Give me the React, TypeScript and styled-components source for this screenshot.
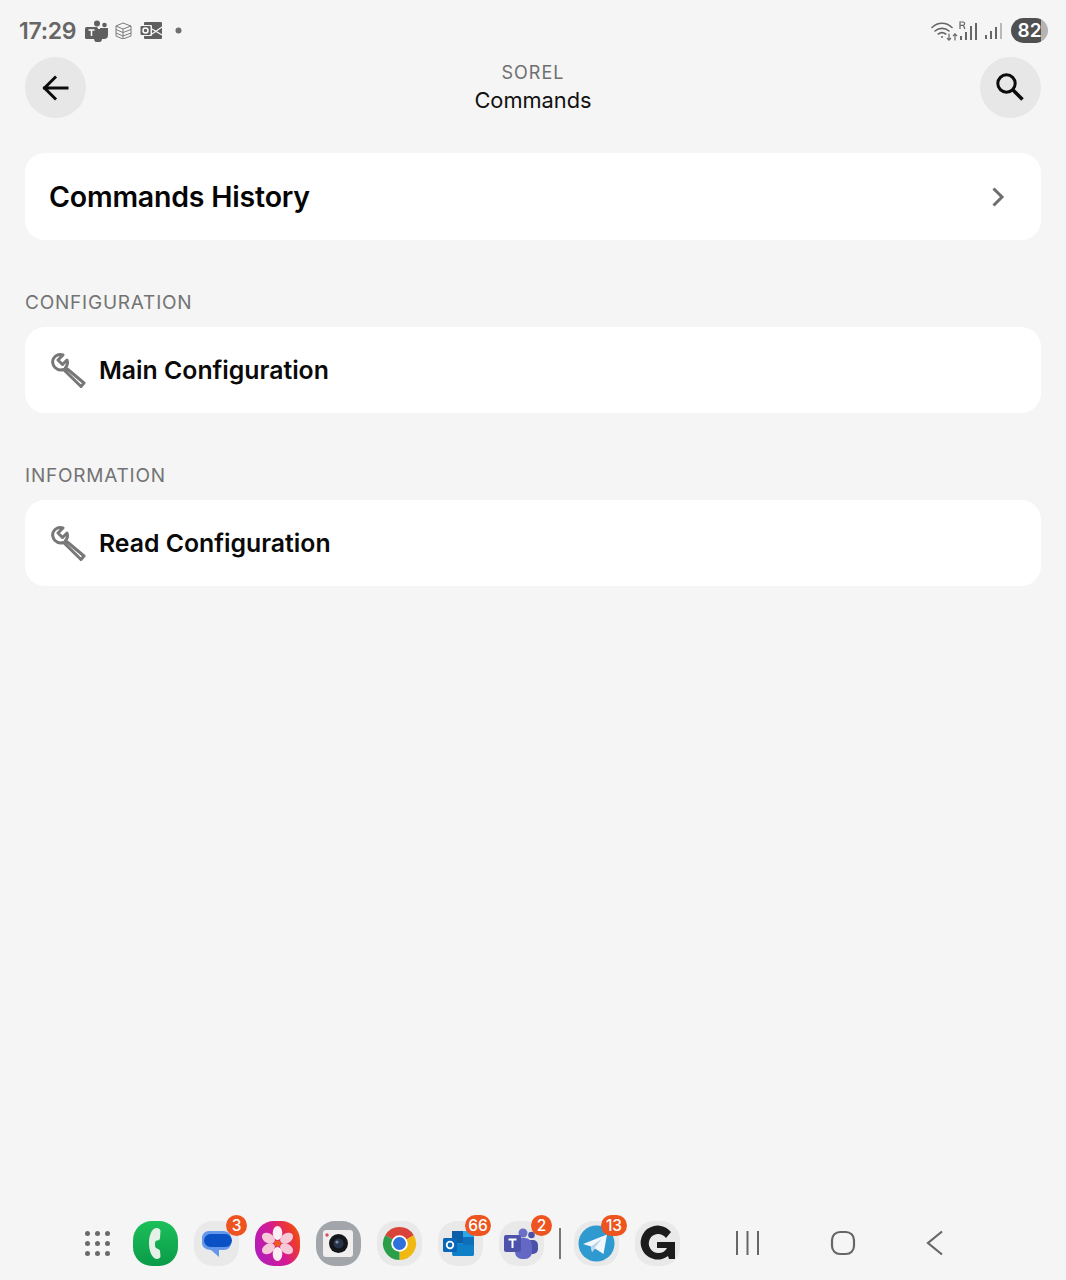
import React from "react";
import styled, { createGlobalStyle } from "styled-components";

const Global = createGlobalStyle`
  html, body { margin: 0; padding: 0; background: #f5f5f5; }
  body { font-family: "Inter", "Liberation Sans", sans-serif; }
`;

const Page = styled.div`
  width: 1066px;
  height: 1280px;
  overflow: hidden;
  display: flex;
  flex-direction: column;
  background: #f5f5f5;
`;

const StatusBar = styled.div`
  height: 57px;
  flex: none;
  padding: 4px 18px 0 19px;
  box-sizing: border-box;
  display: flex;
  align-items: center;
  justify-content: space-between;
  color: #666;
`;

const StatusGroup = styled.div<{ $gap: number }>`
  display: flex;
  align-items: center;
  gap: ${(p) => p.$gap}px;
`;

const Clock = styled.span`
  font-size: 23px;
  font-weight: 600;
  letter-spacing: -0.25px;
  margin-right: 2px;
  color: #666;
`;

const Battery = styled.div`
  width: 37px;
  height: 25px;
  border-radius: 13px;
  background: linear-gradient(90deg, #505050 0 82%, #b4b4b4 82% 100%);
  color: #fff;
  font-size: 19px;
  font-weight: 600;
  display: flex;
  align-items: center;
  justify-content: center;
`;

const Header = styled.header`
  height: 61px;
  flex: none;
  padding: 0 25px;
  display: flex;
  align-items: center;
  justify-content: space-between;
`;

const RoundButton = styled.button`
  width: 61px;
  height: 61px;
  border: 0;
  padding: 0;
  border-radius: 50%;
  background: #e7e7e7;
  display: flex;
  align-items: center;
  justify-content: center;
`;

const TitleBlock = styled.div`
  display: flex;
  flex-direction: column;
  align-items: center;
`;

const Overline = styled.div`
  font-size: 18px;
  line-height: 26px;
  color: #6f6f6f;
  letter-spacing: 1px;
`;

const Title = styled.div`
  font-size: 21.8px;
  line-height: 29px;
  color: #111;
`;

const Content = styled.main`
  flex: 1;
  padding: 35px 25px 0;
  display: flex;
  flex-direction: column;
`;

const Card = styled.div<{ $tall?: boolean }>`
  height: ${(p) => (p.$tall ? "87px" : "86px")};
  box-sizing: border-box;
  padding: 0 25px;
  background: #fff;
  border-radius: 20px;
  display: flex;
  align-items: center;
  gap: 13px;
`;

const HistoryLabel = styled.span`
  flex: 1;
  margin-left: -1px;
  font-size: 28.5px;
  font-weight: 600;
  color: #050505;
  letter-spacing: -0.2px;
`;

const RowLabel = styled.span`
  font-size: 24.8px;
  font-weight: 600;
  color: #0a0a0a;
`;

const SectionLabel = styled.div`
  margin: 51px 0 13px;
  font-size: 19px;
  line-height: 23px;
  letter-spacing: 0.78px;
  color: #737373;
`;

const Dock = styled.footer`
  height: 75px;
  flex: none;
  padding: 1px 0 0 81px;
  box-sizing: border-box;
  display: flex;
  align-items: center;
`;

const Launcher = styled.div`
  width: 32px;
  display: grid;
  grid-template-columns: repeat(3, 5px);
  gap: 5px;
  justify-content: center;
  margin-right: 20px;
  & > i {
    width: 5px;
    height: 5px;
    border-radius: 50%;
    background: #6a6a6a;
  }
`;

const Apps = styled.div`
  display: flex;
  align-items: center;
  gap: 16px;
`;

const AppIcon = styled.div<{ $bg: string }>`
  position: relative;
  width: 45px;
  height: 45px;
  border-radius: 42%;
  background: ${(p) => p.$bg};
  display: flex;
  align-items: center;
  justify-content: center;
  flex: none;
`;

const Badge = styled.span<{ $wide?: boolean }>`
  position: absolute;
  top: -6px;
  right: -8px;
  width: ${(p) => (p.$wide ? "26px" : "21px")};
  height: 21px;
  border-radius: 11px;
  background: #ee5420;
  color: #fff;
  font-size: 15.5px;
  font-weight: 500;
  display: flex;
  align-items: center;
  justify-content: center;
`;

const Divider = styled.div`
  width: 2px;
  height: 31px;
  background: #777;
  margin: 0 -3px 0 -1px;
`;

const NavKeys = styled.div`
  display: flex;
  align-items: center;
  margin-left: 55px;
  gap: 70px;
`;

const Ic = { dark: "#5f5f5f" };

const Wrench = () => (
  <svg width="36" height="36" viewBox="0 0 36 36" fill="none" stroke="#777" strokeWidth="3" strokeLinejoin="round">
    <path d="M13 3 8 8 12.500 12.500 17 8C18 11 17.500 13.500 15.500 15.500L34 31 31 34.500 13.500 17.500C10.500 18.500 7 17.500 5 15.500 2.500 13 2 9 3.500 6.500 6 3 9.500 2 13 3Z" />
  </svg>
);

const PhoneApp = () => (
  <AppIcon $bg="linear-gradient(180deg,#1cc05a,#0a9a48)">
    <svg width="45" height="45" viewBox="0 0 45 45">
      <path d="M23 7c2.500-.5 4.500 1 4.500 3l-.5 7c-.2 1.500-1 2.500-3 2.500-1.500 0-2 1.500-2 4s.5 3.500 2 4c1.500.5 2.500 1 3 2.500l.5 5c0 2-1.500 3-4 3-4-.5-7.500-7-7.500-16S19.500 7.500 23 7z" fill="#e4f0e8" />
    </svg>
  </AppIcon>
);

const MessagesApp = () => (
  <AppIcon $bg="#e9e9e9">
    <svg width="45" height="45" viewBox="0 0 45 45">
      <path d="M8 17c0-4 3-7 7-7h14c5 0 8 3 8 7v5c0 4-3 7-7 7h-5v7l-8-7c-5 0-9-3-9-7z" fill="#6496ea" />
      <rect x="10" y="13" width="28" height="13" rx="6.500" fill="#0b50c4" />
    </svg>
    <Badge>3</Badge>
  </AppIcon>
);

const petalAngles = [0, 60, 120, 180, 240, 300];

const FlowerApp = () => (
  <AppIcon $bg="linear-gradient(65deg,#a81fc4 0%,#d41a94 50%,#ee3a2a 80%,#e8700e 100%)">
    <svg width="45" height="45" viewBox="0 0 45 45">
      {petalAngles.map((a, i) => (
        <ellipse key={a} cx="22.500" cy="12" rx="4.800" ry="7" fill={i % 3 === 0 ? "#fbeef2" : "#f5c9d8"} transform={`rotate(${a} 22.500 22.500)`} />
      ))}
      <circle cx="22.500" cy="22.500" r="3.300" fill="#ee5a1c" />
    </svg>
  </AppIcon>
);

const CameraApp = () => (
  <AppIcon $bg="#a2a6ab">
    <svg width="45" height="45" viewBox="0 0 45 45">
      <rect x="7" y="9" width="30" height="27" rx="3" fill="#f0eeee" />
      <circle cx="22.500" cy="22.500" r="9.500" fill="#14161a" />
      <circle cx="22.500" cy="22.500" r="5" fill="#26344a" />
      <circle cx="21" cy="21" r="1.600" fill="#7c8ea5" />
      <circle cx="11" cy="14" r="1.700" fill="#d8505a" />
    </svg>
  </AppIcon>
);

const ChromeApp = () => (
  <AppIcon $bg="#e9e9e9">
    <svg width="45" height="45" viewBox="0 0 45 45">
      <path d="M22.500 22.500 8.210 14.250A16.500 16.500 0 0 1 36.790 14.250Z" fill="#d9433a" />
      <path d="M22.500 22.500 36.790 14.250A16.500 16.500 0 0 1 22.500 39Z" fill="#f0b810" />
      <path d="M22.500 22.500 22.500 39A16.500 16.500 0 0 1 8.210 14.250Z" fill="#2b9e4a" />
      <circle cx="22.500" cy="22.500" r="8.300" fill="#fff" />
      <circle cx="22.500" cy="22.500" r="6.500" fill="#2f70dc" />
    </svg>
  </AppIcon>
);

const OutlookApp = () => (
  <AppIcon $bg="#e9e9e9">
    <svg width="45" height="45" viewBox="0 0 45 45">
      <rect x="14" y="10" width="22" height="25" rx="2" fill="#1488d6" />
      <rect x="14" y="10" width="11" height="12" fill="#0e5fa8" />
      <rect x="25" y="10" width="11" height="12" fill="#2aa8e8" />
      <path d="M15 23h21v10a2 2 0 0 1-2 2H15z" fill="#0f7fc8" />
      <rect x="25" y="16" width="11" height="8" fill="#0e70b8" />
      <rect x="5" y="17" width="14" height="14" rx="1.500" fill="#0a66b8" />
      <circle cx="12" cy="24" r="3.300" fill="none" stroke="#fff" strokeWidth="1.800" />
    </svg>
    <Badge $wide>66</Badge>
  </AppIcon>
);

const TeamsApp = () => (
  <AppIcon $bg="#e9e9e9">
    <svg width="45" height="45" viewBox="0 0 45 45">
      <circle cx="24" cy="12" r="4.500" fill="#6b6fc6" />
      <circle cx="32.500" cy="14" r="3.300" fill="#4c51a8" />
      <rect x="27" y="19" width="12" height="14" rx="5" fill="#4c51a8" />
      <rect x="16" y="17" width="17" height="21" rx="7" fill="#6268c4" />
      <rect x="5" y="14" width="17" height="17" rx="2" fill="#4d52aa" />
      <path d="M9.500 18.500h8M13.500 18.500v8.500" stroke="#fff" strokeWidth="2" />
    </svg>
    <Badge>2</Badge>
  </AppIcon>
);

const TelegramApp = () => (
  <AppIcon $bg="#e9e9e9">
    <svg width="45" height="45" viewBox="0 0 45 45">
      <circle cx="22.500" cy="22.500" r="18" fill="#2f9ad0" />
      <path d="M9 23 33 13.500 29.500 33 21 27.500 18 31 17 25.500Z" fill="#f2f7fb" />
      <path d="M17 25.500 28 17.500 20.500 27 18 31Z" fill="#b7d6ea" />
    </svg>
    <Badge $wide>13</Badge>
  </AppIcon>
);

const GApp = () => (
  <AppIcon $bg="#e9e9e9">
    <svg width="45" height="45" viewBox="0 0 45 45">
      <path d="M36 11A17 17 0 1 0 33 35L34 38H40V21H22V27H32C30.500 30 27.500 32 23.500 32A9.500 9.500 0 1 1 31 17Z" fill="#1c1c1c" />
    </svg>
  </AppIcon>
);

export default function App() {
  return (
    <Page>
      <Global />
      <StatusBar>
        <StatusGroup $gap={7}>
          <Clock>17:29</Clock>
          <svg width="23" height="22" viewBox="0 0 23 22" fill={Ic.dark}>
            <circle cx="12" cy="3.500" r="3" />
            <circle cx="19.500" cy="5" r="2.300" />
            <path d="M15 8h8v7a4 4 0 0 1-4 4h-4z" />
            <path d="M8 9h9v9a4 4 0 0 1-8 1z" />
            <rect x="0" y="7" width="13" height="12" rx="1.500" />
            <path d="M3.500 10h6M6.500 10v6" stroke="#fff" strokeWidth="1.500" />
          </svg>
          <svg width="17" height="17" viewBox="0 0 17 17" fill="none" stroke="#7b7b7b" strokeWidth="1">
            <path d="M1 4l7-3 8 3-8 3zM1 4v10l7 3 8-3V4M8 7v10M1 7.500l7 3 8-3M1 11l7 3 8-3" />
          </svg>
          <svg width="23" height="17" viewBox="0 0 23 17" fill={Ic.dark}>
            <rect x="5" y="0" width="18" height="17" rx="1" />
            <rect x="0" y="3" width="13" height="11" rx="1" fill="#f5f5f5" />
            <rect x="1.500" y="4" width="10" height="9" rx="1" fill={Ic.dark} />
            <circle cx="6.500" cy="8.500" r="2.500" fill="none" stroke="#fff" strokeWidth="1.500" />
            <path d="M13 7l10 6M13 12l10-7" stroke="#f5f5f5" strokeWidth="1.300" />
          </svg>
          <svg width="7" height="7" viewBox="0 0 7 7" style={{ marginLeft: 6 }}>
            <circle cx="3.500" cy="3.500" r="3" fill="#6e6e6e" />
          </svg>
        </StatusGroup>
        <StatusGroup $gap={8}>
          <svg width="27" height="20" viewBox="0 0 27 20" fill="none" stroke="#666" strokeWidth="1.600" strokeLinecap="round">
            <path d="M1 6.500C7 .8 15 .8 21 6.500M4 10c4-3.500 10-3.500 14 0M7.300 13c2.300-1.800 5.100-1.800 7.400 0" />
            <circle cx="11" cy="16" r="1" fill="#666" stroke="none" />
            <path d="M18 13v6M16.300 17.300l1.700 1.800 1.700-1.800M24 19v-6M22.300 14.700l1.700-1.800 1.700 1.800" strokeWidth="1.200" />
          </svg>
          <svg width="19" height="20" viewBox="0 0 19 20" fill="#666" style={{ marginLeft: -7 }}>
            <rect x="1" y="15" width="2" height="4" />
            <rect x="6" y="11" width="2" height="8" />
            <rect x="11" y="5" width="2" height="14" />
            <rect x="16" y="2" width="2" height="17" />
            <path d="M1 8V1h3a1.700 1.700 0 0 1 .5 3.300L5.800 8M1 4.400h3" fill="none" stroke="#666" strokeWidth="1.200" />
          </svg>
          <svg width="18" height="18" viewBox="0 0 18 18" style={{ marginLeft: -1 }}>
            <rect x="0" y="13" width="2" height="4" fill="#666" />
            <rect x="5" y="9" width="2" height="8" fill="#666" />
            <rect x="10" y="5" width="2" height="12" fill="#666" />
            <rect x="15" y="1" width="2" height="16" fill="#b8b8b8" />
          </svg>
          <Battery>82</Battery>
        </StatusGroup>
      </StatusBar>

      <Header>
        <RoundButton aria-label="Back">
          <svg width="28" height="26" viewBox="0 0 28 26" fill="none" stroke="#0c0c0c" strokeWidth="3" strokeLinecap="square">
            <path d="M2.500 13H25M13 2.500 2.500 13 13 23.500" />
          </svg>
        </RoundButton>
        <TitleBlock>
          <Overline>SOREL</Overline>
          <Title>Commands</Title>
        </TitleBlock>
        <RoundButton aria-label="Search">
          <svg width="30" height="30" viewBox="0 0 30 30" fill="none" stroke="#0c0c0c" strokeWidth="3">
            <circle cx="10.500" cy="10.500" r="8.700" />
            <path d="M17 17 26.500 26.500" strokeWidth="3.500" />
          </svg>
        </RoundButton>
      </Header>

      <Content>
        <Card $tall>
          <HistoryLabel>Commands History</HistoryLabel>
          <svg width="16" height="22" viewBox="0 0 16 22" fill="none" stroke="#6e6e6e" strokeWidth="3" style={{ marginRight: 10 }}>
            <path d="M3.500 2.500 12 11l-8.500 8.500" />
          </svg>
        </Card>
        <SectionLabel>CONFIGURATION</SectionLabel>
        <Card>
          <Wrench />
          <RowLabel>Main Configuration</RowLabel>
        </Card>
        <SectionLabel>INFORMATION</SectionLabel>
        <Card>
          <Wrench />
          <RowLabel>Read Configuration</RowLabel>
        </Card>
      </Content>

      <Dock>
        <Launcher>
          {Array.from({ length: 9 }, (_, i) => (
            <i key={i} />
          ))}
        </Launcher>
        <Apps>
          <PhoneApp />
          <MessagesApp />
          <FlowerApp />
          <CameraApp />
          <ChromeApp />
          <OutlookApp />
          <TeamsApp />
          <Divider />
          <TelegramApp />
          <GApp />
        </Apps>
        <NavKeys>
          <svg width="25" height="24" viewBox="0 0 25 24" stroke="#666" strokeWidth="2">
            <path d="M2 0v24M12.500 0v24M23 0v24" />
          </svg>
          <svg width="26" height="26" viewBox="0 0 26 26" fill="none" stroke="#666" strokeWidth="2.200">
            <rect x="2" y="2" width="22" height="22" rx="8" />
          </svg>
          <svg width="18" height="26" viewBox="0 0 18 26" fill="none" stroke="#666" strokeWidth="2.200">
            <path d="M16 1.500 2 13l14 11.500" />
          </svg>
        </NavKeys>
      </Dock>
    </Page>
  );
}
